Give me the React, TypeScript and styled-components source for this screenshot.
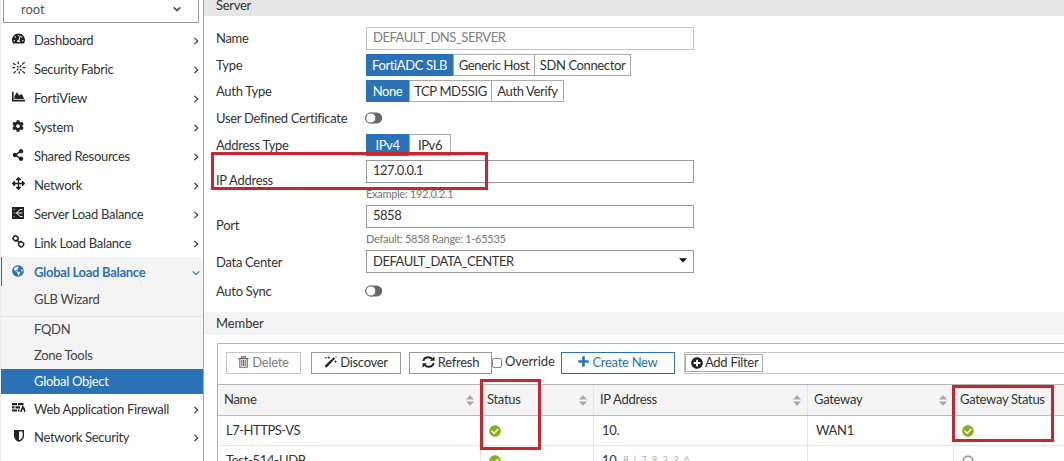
import React from "react";
import styled, { createGlobalStyle } from "styled-components";
import {
  FaTachometerAlt, FaChartArea, FaCog, FaShareAlt, FaArrowsAlt, FaGlobeAmericas,
  FaPlusCircle, FaCheckCircle,
} from "react-icons/fa";

const Global = createGlobalStyle`
  * { box-sizing: border-box; }
  body { margin: 0; background: #fff; overflow: hidden; }
`;

const Page = styled.div`
  position: relative;
  display: flex;
  width: 1064px;
  height: 461px;
  overflow: hidden;
  font: 13px/16px Lato, "Liberation Sans", sans-serif;
  letter-spacing: -0.29px;
  color: #333;
  background: #fff;
  white-space: nowrap;
`;

const Sidebar = styled.nav`
  flex: none;
  width: 204px;
  height: 461px;
  overflow: hidden;
  border-right: 1px solid #a6a6a6;
  border-left: 1px solid #eee;
`;

const DomainSelect = styled.div`
  display: flex;
  align-items: center;
  justify-content: space-between;
  width: 196px;
  height: 23px;
  margin: 0 0 2px 2px;
  padding: 0 16px 5px 17px;
  border: 1px solid #999;
  border-top: 0;
  color: #555;
  letter-spacing: 0;
`;

const NavRow = styled.div<{ $h?: number; $active?: boolean }>`
  display: flex;
  align-items: center;
  height: ${(p) => p.$h ?? 29}px;
  margin-left: -1px;
  padding-left: ${(p) => (p.$active ? 10 : 12)}px;
  padding-right: 3px;
  border-left: ${(p) => (p.$active ? "2px solid #2a72b5" : "0")};
  background: ${(p) => (p.$active ? "#f4f4f4" : "transparent")};
  color: ${(p) => (p.$active ? "#2a72b5" : "#333")};
  font-weight: ${(p) => (p.$active ? 700 : 400)};
  & > svg { margin-top: 2px; }
`;

const NavIcon = styled.span<{ $indent?: number }>`
  display: flex;
  width: 22px;
  flex: none;
  padding-left: ${(p) => p.$indent ?? 0}px;
  padding-bottom: 2px;
  color: #222;
  ${NavRow}[data-active="true"] & { color: #2a72b5; }
`;

const NavText = styled.span`
  flex: 1;
`;

const SubItem = styled.div<{ $h: number; $selected?: boolean; $line?: boolean }>`
  display: flex;
  align-items: center;
  height: ${(p) => p.$h}px;
  padding-left: 33px;
  background: ${(p) => (p.$selected ? "#2a72b5" : "#f4f4f4")};
  color: ${(p) => (p.$selected ? "#fff" : "#444")};
  border-bottom: ${(p) => (p.$line ? "1px solid #e2e2e2" : "0")};
  padding-bottom: ${(p) => (p.$line ? 5 : 2)}px;
`;

const Main = styled.main`
  flex: 1;
  min-width: 0;
`;

const SectionHead = styled.div<{ $h: number; $first?: boolean }>`
  display: flex;
  align-items: center;
  height: ${(p) => p.$h}px;
  padding-left: 12px;
  padding-bottom: ${(p) => (p.$first ? 7 : 1)}px;
  background: ${(p) => (p.$first ? "#e6e6e6" : "#f4f4f4")};
  letter-spacing: ${(p) => (p.$first ? -0.29 : -0.1)}px;
`;

const Form = styled.div`
  padding: 8px 0 7px 12px;
`;

const FormRow = styled.div<{ $h: number }>`
  display: flex;
  align-items: center;
  height: ${(p) => p.$h}px;
`;

const Label = styled.label`
  width: 150px;
  flex: none;
`;

const Field = styled.div`
  display: flex;
  flex-direction: column;
  padding-top: 1px;
`;

const Input = styled.div<{ $muted?: boolean }>`
  display: flex;
  align-items: center;
  justify-content: space-between;
  width: 328px;
  height: 23px;
  padding: 0 6px 2px;
  border: 1px solid ${(p) => (p.$muted ? "#c4c4c4" : "#999")};
  color: ${(p) => (p.$muted ? "#808080" : "#333")};
  letter-spacing: -0.48px;
`;

const Hint = styled.div`
  height: 19px;
  padding-top: 3px;
  font-size: 11px;
  color: #777;
`;

const Segments = styled.div`
  display: flex;
  height: 22px;
  border: 1px solid #aaa;
  letter-spacing: -0.38px;
`;

const Segment = styled.div<{ $w: number; $on?: boolean }>`
  display: flex;
  align-items: center;
  justify-content: center;
  width: ${(p) => p.$w}px;
  margin: ${(p) => (p.$on ? "-1px 0 -1px -1px" : "0")};
  color: ${(p) => (p.$on ? "#fff" : "#333")};
  background: ${(p) => (p.$on ? "#2a72b5" : "#fff")};
  & + & { border-left: 1px solid #aaa; }
`;

const Switch = styled.span`
  display: flex;
  margin-left: -1px;
`;

const Panel = styled.section`
  margin: 8px 0 0 13px;
  height: 130px;
  border-top: 1px solid #b5b5b5;
  border-left: 1px solid #b5b5b5;
`;

const Toolbar = styled.div`
  display: flex;
  align-items: center;
  height: 40px;
  padding: 0 0 3px 8px;
`;

const Button = styled.div<{ $w: number; $mr: number; $tone?: string; $line?: string }>`
  display: flex;
  align-items: center;
  justify-content: center;
  gap: 3px;
  flex: none;
  width: ${(p) => p.$w}px;
  height: 22px;
  padding-bottom: 2px;
  margin-right: ${(p) => p.$mr}px;
  border: 1px solid ${(p) => p.$line ?? "#999"};
  color: ${(p) => p.$tone ?? "#333"};
`;

const Check = styled.span`
  width: 10px;
  height: 10px;
  border: 1px solid #888;
  border-radius: 2px;
  margin-right: 3px;
`;

const Override = styled.span`
  width: 56px;
  padding-bottom: 3px;
  letter-spacing: -0.1px;
`;

const FilterBar = styled.div`
  display: flex;
  align-items: center;
  flex: 1;
  height: 22px;
  border: 1px solid #c4c4c4;
  border-right: 0;
`;

const FilterChip = styled.div`
  display: flex;
  align-items: center;
  gap: 2px;
  width: 78px;
  height: 18px;
  padding: 0 0 2px 5px;
  border: 1px solid #aaa;
  & > svg { margin-top: 2px; }
`;

const TableRow = styled.div<{ $head?: boolean }>`
  display: grid;
  grid-template-columns: 262px 113px 214px 146px 1fr;
  height: ${(p) => (p.$head ? 32 : 30)}px;
  background: ${(p) => (p.$head ? "#f4f4f4" : "#fff")};
  border-top: ${(p) => (p.$head ? "1px solid #b5b5b5" : "0")};
  border-bottom: 1px solid ${(p) => (p.$head ? "#bbb" : "#e6e6e6")};
`;

const Cell = styled.div<{ $head?: boolean; $ls?: number }>`
  display: flex;
  align-items: center;
  justify-content: space-between;
  padding: 0 6px 2px ${(p) => (p.$head ? 6 : 8)}px;
  letter-spacing: ${(p) => p.$ls ?? -0.29}px;
  & + & { border-left: 1px solid ${(p) => (p.$head ? "#aaa" : "#e6e6e6")}; }
  & > svg { margin-top: 2px; }
`;

const Redacted = styled.span`
  flex: 1;
  font-size: 9px;
  letter-spacing: 1.6px;
  color: #aaa;
  padding-left: 4px;
`;

const Highlight = styled.div<{ $x: number; $y: number; $w: number; $h: number }>`
  position: absolute;
  left: ${(p) => p.$x}px;
  top: ${(p) => p.$y}px;
  width: ${(p) => p.$w}px;
  height: ${(p) => p.$h}px;
  border: 3px solid #c9252d;
`;

const Chevron = ({ down, bold }: { down?: boolean; bold?: boolean }) => (
  <svg width={bold ? 10 : 8} height={8} viewBox="0 0 8 8" fill="none" stroke="currentColor" strokeWidth={bold ? 1.8 : 1.1}>
    <path d={down ? "M0.7 2.3 4 5.5 7.3 2.3" : "M2.4 0.8 5.8 4 2.4 7.2"} />
  </svg>
);

const FabricIcon = () => (
  <svg width="14" height="14" viewBox="0 0 14 14" fill="none" stroke="currentColor" strokeWidth="1.3">
    <path d="M1.200 2.200l2.400 1.900M5 5.300l1.400 1.200M5.800.8l.8 2.200M12.600 1.200l-2.200 2.200M9.400 4.400 7.600 6.200M.4 6.600h2.800M10.600 6.600h2.800M6.400 7.600 4.600 9.400M3.700 10.200l-2.200 2.200M8 8.200l1.600 1.400M10.500 10.300l2.400 2M7.200 10.600v2.200" />
  </svg>
);

const LinkIcon = () => (
  <svg width="13" height="13" viewBox="0 0 13 13" fill="none" stroke="currentColor" strokeWidth="1.5">
    <rect x="1.2" y="1.1" width="5" height="4.6" rx="2.1" transform="rotate(40 3.7 3.4)" />
    <rect x="6.6" y="7" width="5" height="4.6" rx="2.1" transform="rotate(40 9.1 9.3)" />
    <path d="M4.600 4.800 8 8" />
  </svg>
);

const BalanceIcon = () => (
  <svg width="12" height="12" viewBox="0 0 12 12">
    <rect width="12" height="12" fill="#222" />
    <path d="M4.500 6 8 2.500h2.500M4.500 6h6M4.500 6 8 9.500h2.500" stroke="#fff" strokeWidth="1" fill="none" />
    <path d="M1.500 6h2M1.500 2.500h1.500M1.500 9.500h1.500" stroke="#aaa" strokeWidth=".8" />
  </svg>
);

const WafIcon = () => (
  <svg width="14" height="10" viewBox="0 0 14 10" fill="#222">
    <path d="M0 0h5v2.200H0zM6 0h5.500v2.200H6zM0 3.200h2.500v2.200H0zM3.500 3.200H8v2.200H3.500zM0 6.400h5v2.200H0zM6 6.400h1.600v2.200H6z" />
    <path d="M10 2.200c2 1 3.700 3.200 3.300 6.800h-1.200c0-1.600-.6-2.400-1.300-3-.2 1.400-.9 1.800-.9 3H8.500C8 6.500 10.500 5 10 2.200z" />
  </svg>
);

const ShieldIcon = () => (
  <svg width="10" height="12" viewBox="0 0 10 12">
    <path d="M.7.8h8.600v5.200c0 2.500-2.200 4.200-4.300 5.200C2.900 10.200.7 8.500.7 6z" fill="#fff" stroke="#222" strokeWidth="1.400" />
    <path d="M5 1H1v5c0 2.300 2 4 4 5z" fill="#222" />
  </svg>
);

const TrashIcon = () => (
  <svg width="11" height="12" viewBox="0 0 11 12" fill="none" stroke="#666">
    <path d="M.5 2.600h10M3.500 2.300V.8h4v1.500" strokeWidth="1.200" />
    <path d="M1.800 3v8.300h7.400V3M3.800 4v6M5.500 4v6M7.200 4v6" strokeWidth="1.100" />
  </svg>
);

const WandIcon = () => (
  <svg width="13" height="12" viewBox="0 0 13 12">
    <path d="M1.500 10.800 10.300 2" stroke="#222" strokeWidth="2.400" fill="none" />
    <path d="M7.700 3.200 9.200 4.700" stroke="#fff" strokeWidth=".7" />
    <path d="M4.800.4v2.400M3.600 1.600H6M11.500 4.500v2.200M10.400 5.600h2.200M1.800 1v1.400M1.100 1.700h1.400M12 .2v1.400" stroke="#222" strokeWidth=".8" />
  </svg>
);

const PlusIcon = () => (
  <svg width="11" height="11" viewBox="0 0 11 11">
    <path d="M5.500.3v10.400M.3 5.500h10.400" stroke="currentColor" strokeWidth="2.600" />
  </svg>
);

const RefreshIcon = () => (
  <svg width="13" height="12" viewBox="0 0 13 12" fill="none" stroke="#222" strokeWidth="1.900">
    <path d="M1.300 5C1.800 2.800 3.900 1.300 6.400 1.300c1.700 0 3 .7 4 1.900M11.700 7c-.5 2.200-2.600 3.700-5.100 3.700-1.700 0-3-.7-4-1.900" />
    <path d="M12.500.3v4.500H8zM.5 11.700V7.200H5z" fill="#222" stroke="none" />
  </svg>
);

const Toggle = () => (
  <Switch>
    <svg width="18" height="12" viewBox="0 0 18 12">
      <rect x=".2" y=".6" width="17" height="10.800" rx="5.400" fill="#666" />
      <circle cx="5.800" cy="6" r="5" fill="#fff" stroke="#666" strokeWidth=".9" />
    </svg>
  </Switch>
);

const Sort = () => (
  <svg width="8" height="11" viewBox="0 0 8 11" fill="#aaa">
    <path d="M0 4.600 4 0l4 4.600zM0 6.400 4 11l4-4.600z" />
  </svg>
);

const topNav = [
  { text: "Dashboard", icon: <FaTachometerAlt size={13} /> },
  { text: "Security Fabric", icon: <FabricIcon /> },
  { text: "FortiView", icon: <FaChartArea size={13} /> },
  { text: "System", icon: <FaCog size={12} /> },
  { text: "Shared Resources", icon: <FaShareAlt size={12} /> },
  { text: "Network", icon: <FaArrowsAlt size={13} /> },
  { text: "Server Load Balance", icon: <BalanceIcon /> },
  { text: "Link Load Balance", icon: <LinkIcon /> },
];

export default function App() {
  return (
    <Page>
      <Global />
      <Sidebar>
        <DomainSelect>root<Chevron down bold /></DomainSelect>
        {topNav.map((n) => (
          <NavRow key={n.text}>
            <NavIcon>{n.icon}</NavIcon>
            <NavText>{n.text}</NavText>
            <Chevron />
          </NavRow>
        ))}
        <NavRow $active data-active="true">
          <NavIcon><FaGlobeAmericas size={12} /></NavIcon>
          <NavText>Global Load Balance</NavText>
          <Chevron down />
        </NavRow>
        <SubItem $h={31} $line>GLB Wizard</SubItem>
        <SubItem $h={26}>FQDN</SubItem>
        <SubItem $h={26}>Zone Tools</SubItem>
        <SubItem $h={25} $selected>Global Object</SubItem>
        <NavRow $h={29}>
          <NavIcon><WafIcon /></NavIcon>
          <NavText>Web Application Firewall</NavText>
          <Chevron />
        </NavRow>
        <NavRow $h={28}>
          <NavIcon $indent={2}><ShieldIcon /></NavIcon>
          <NavText>Network Security</NavText>
          <Chevron />
        </NavRow>
      </Sidebar>
      <Main>
        <SectionHead $h={16} $first>Server</SectionHead>
        <Form>
          <FormRow $h={28}><Label>Name</Label><Input $muted>DEFAULT_DNS_SERVER</Input></FormRow>
          <FormRow $h={26}>
            <Label>Type</Label>
            <Segments>
              <Segment $w={87} $on>FortiADC SLB</Segment>
              <Segment $w={81}>Generic Host</Segment>
              <Segment $w={96}>SDN Connector</Segment>
            </Segments>
          </FormRow>
          <FormRow $h={26}>
            <Label>Auth Type</Label>
            <Segments>
              <Segment $w={43} $on>None</Segment>
              <Segment $w={82}>TCP MD5SIG</Segment>
              <Segment $w={72}>Auth Verify</Segment>
            </Segments>
          </FormRow>
          <FormRow $h={28}><Label>User Defined Certificate</Label><Toggle /></FormRow>
          <FormRow $h={25}>
            <Label>Address Type</Label>
            <Segments>
              <Segment $w={43} $on>IPv4</Segment>
              <Segment $w={41}>IPv6</Segment>
            </Segments>
          </FormRow>
          <FormRow $h={46}>
            <Label>IP Address</Label>
            <Field><Input>127.0.0.1</Input><Hint>Example: 192.0.2.1</Hint></Field>
          </FormRow>
          <FormRow $h={44}>
            <Label>Port</Label>
            <Field><Input>5858</Input><Hint>Default: 5858 Range: 1-65535</Hint></Field>
          </FormRow>
          <FormRow $h={29}>
            <Label>Data Center</Label>
            <Input>
              DEFAULT_DATA_CENTER
              <svg width="8" height="5" viewBox="0 0 8 5"><path d="M0 .3h8L4 4.600z" fill="#111" /></svg>
            </Input>
          </FormRow>
          <FormRow $h={29}><Label>Auto Sync</Label><Toggle /></FormRow>
        </Form>
        <SectionHead $h={23}>Member</SectionHead>
        <Panel>
          <Toolbar>
            <Button $w={75} $mr={10} $tone="#808080" $line="#c4c4c4"><TrashIcon />Delete</Button>
            <Button $w={90} $mr={8}><WandIcon />Discover</Button>
            <Button $w={83} $mr={0}><RefreshIcon />Refresh</Button>
            <Check />
            <Override>Override</Override>
            <Button $w={114} $mr={9} $tone="#2a72b5" $line="#2a72b5"><PlusIcon />Create New</Button>
            <FilterBar><FilterChip><FaPlusCircle size={12} color="#222" />Add Filter</FilterChip></FilterBar>
          </Toolbar>
          <TableRow $head>
            <Cell $head>Name<Sort /></Cell>
            <Cell $head>Status<Sort /></Cell>
            <Cell $head>IP Address<Sort /></Cell>
            <Cell $head>Gateway<Sort /></Cell>
            <Cell $head>Gateway Status</Cell>
          </TableRow>
          <TableRow>
            <Cell $ls={-0.48}>L7-HTTPS-VS</Cell>
            <Cell><FaCheckCircle size={12} color="#84b11c" /></Cell>
            <Cell>10.</Cell>
            <Cell>WAN1</Cell>
            <Cell><FaCheckCircle size={12} color="#84b11c" /></Cell>
          </TableRow>
          <TableRow>
            <Cell>Test-514-UDP</Cell>
            <Cell><FaCheckCircle size={12} color="#84b11c" /></Cell>
            <Cell>10.<Redacted>8.(.7.9.2.2.6</Redacted></Cell>
            <Cell />
            <Cell><svg width="12" height="12" viewBox="0 0 12 12"><circle cx="6" cy="6" r="4.800" fill="none" stroke="#999" strokeWidth="1.800" /></svg></Cell>
          </TableRow>
        </Panel>
      </Main>
      <Highlight $x={211} $y={152} $w={277} $h={38} />
      <Highlight $x={480} $y={379} $w={61} $h={71} />
      <Highlight $x={952} $y={385} $w={102} $h={57} />
    </Page>
  );
}
